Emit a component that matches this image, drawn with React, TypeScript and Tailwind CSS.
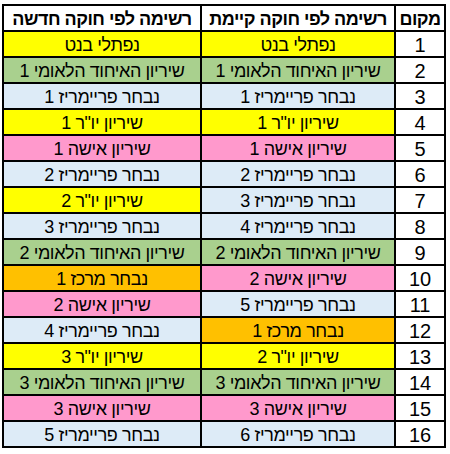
import React from "react";

type Tone = "yellow" | "green" | "blue" | "pink" | "orange";

const tones: Record<Tone, string> = {
  yellow: "bg-[#ffff00]",
  green: "bg-[#a9d08e]",
  blue: "bg-[#ddebf7]",
  pink: "bg-[#ff99cc]",
  orange: "bg-[#ffc000]",
};

// [existing constitution, new constitution] per place
const rows: [string, Tone, string, Tone][] = [
  ["נפתלי בנט", "yellow", "נפתלי בנט", "yellow"],
  ["שיריון האיחוד הלאומי 1", "green", "שיריון האיחוד הלאומי 1", "green"],
  ["נבחר פריימריז 1", "blue", "נבחר פריימריז 1", "blue"],
  ['שיריון יו"ר 1', "yellow", 'שיריון יו"ר 1', "yellow"],
  ["שיריון אישה 1", "pink", "שיריון אישה 1", "pink"],
  ["נבחר פריימריז 2", "blue", "נבחר פריימריז 2", "blue"],
  ["נבחר פריימריז 3", "blue", 'שיריון יו"ר 2', "yellow"],
  ["נבחר פריימריז 4", "blue", "נבחר פריימריז 3", "blue"],
  ["שיריון האיחוד הלאומי 2", "green", "שיריון האיחוד הלאומי 2", "green"],
  ["שיריון אישה 2", "pink", "נבחר מרכז 1", "orange"],
  ["נבחר פריימריז 5", "blue", "שיריון אישה 2", "pink"],
  ["נבחר מרכז 1", "orange", "נבחר פריימריז 4", "blue"],
  ['שיריון יו"ר 2', "yellow", 'שיריון יו"ר 3', "yellow"],
  ["שיריון האיחוד הלאומי 3", "green", "שיריון האיחוד הלאומי 3", "green"],
  ["שיריון אישה 3", "pink", "שיריון אישה 3", "pink"],
  ["נבחר פריימריז 6", "blue", "נבחר פריימריז 5", "blue"],
];

function Cell({ children, className = "" }: { children: React.ReactNode; className?: string }) {
  return (
    <div className={`flex h-[24px] items-center justify-center whitespace-nowrap pt-[2px] leading-none ${className}`}>
      {children}
    </div>
  );
}

export default function App() {
  return (
    <div className="h-[454px] w-[450px] overflow-hidden bg-white pl-[2px] pt-[4px] font-['Liberation_Sans',Arial,sans-serif] text-black">
      <div
        dir="rtl"
        className="grid w-[444px] grid-cols-[48px_192px_196px] gap-[2px] border-2 border-black bg-black text-[18px] tracking-[-0.4px]"
      >
        <Cell className="bg-white font-bold tracking-[-0.5px]">מקום</Cell>
        <Cell className="bg-white font-bold tracking-[-0.5px]">רשימה לפי חוקה קיימת</Cell>
        <Cell className="bg-white font-bold tracking-[-0.5px]">רשימה לפי חוקה חדשה</Cell>
        {rows.map(([oldName, oldTone, newName, newTone], i) => (
          <React.Fragment key={i}>
            <Cell className="bg-white text-[20px] tracking-normal">{i + 1}</Cell>
            <Cell className={tones[oldTone]}>{oldName}</Cell>
            <Cell className={tones[newTone]}>{newName}</Cell>
          </React.Fragment>
        ))}
      </div>
    </div>
  );
}
